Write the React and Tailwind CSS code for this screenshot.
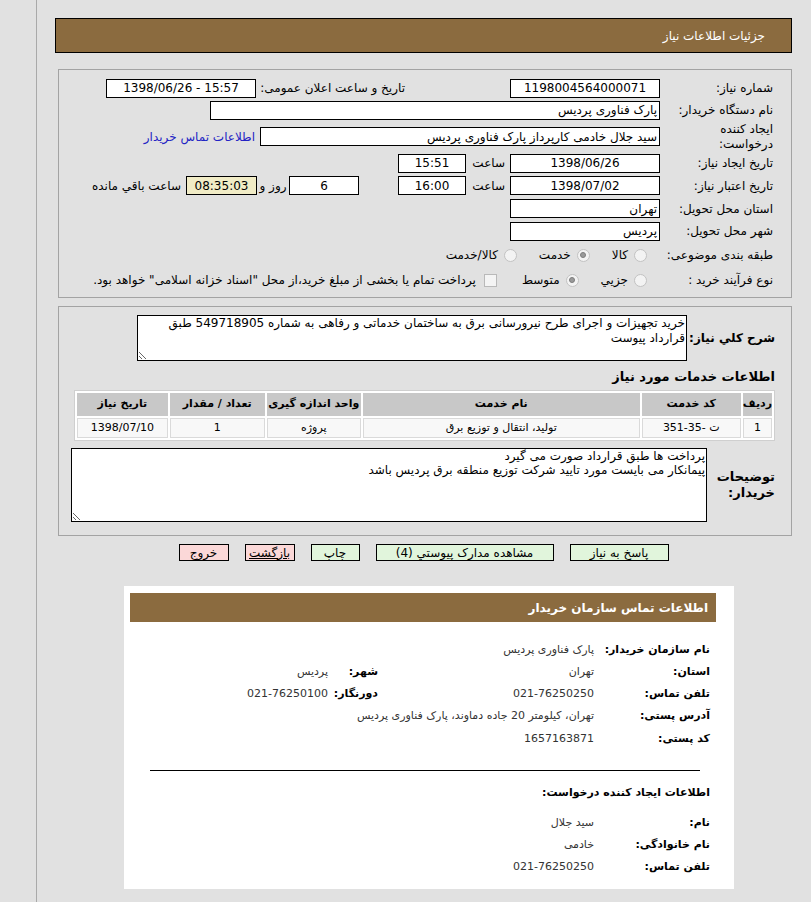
import React from 'react'

function Box({ className = '', ltr, children }) {
  return (
    <div
      dir={ltr ? 'ltr' : undefined}
      className={`flex h-[19px] shrink-0 items-center border border-black bg-white px-[2px] leading-none ${className}`}
    >
      {children}
    </div>
  )
}

function Radio({ checked }) {
  return (
    <span className="inline-flex h-[13px] w-[13px] shrink-0 items-center justify-center rounded-full border border-[#c2c2c2] bg-[#f3f3f3]">
      {checked && <span className="h-[6px] w-[6px] rounded-full border border-[#7d7d7d] bg-[#9a9a9a]" />}
    </span>
  )
}

function Choice({ checked, label, className = '' }) {
  return (
    <span className={`flex items-center gap-[6px] ${className}`}>
      <Radio checked={checked} />
      <span>{label}</span>
    </span>
  )
}

function CardRow({ label, value, label2, value2 }) {
  return (
    <div className="flex h-[22px] items-center whitespace-nowrap">
      <span className="w-[116px] shrink-0 text-[11px] font-bold">{label}</span>
      <span className="w-[216px] shrink-0 text-[11px] text-[#333]">{value}</span>
      {label2 && <span className="w-[50px] shrink-0 text-[11px] font-bold">{label2}</span>}
      {value2 && <span className="text-[11px] text-[#333]">{value2}</span>}
    </div>
  )
}

export default function App() {
  const items = [
    { row: '1', code: '351-35- ت', name: 'تولید، انتقال و توزیع برق', unit: 'پروژه', qty: '1', date: '1398/07/10' },
  ]

  return (
    <div className="flex min-h-[902px] bg-[#e1e1e1] font-['DejaVu_Sans',sans-serif] text-[12px] text-black">
      <div className="w-[37px] shrink-0 border-r border-[#a9a9a9]" />
      <div dir="rtl" className="flex-1 pl-[18px] pr-[19px] pt-[18px]">
        <div className="flex h-[35px] items-center border border-black bg-[#8b6b3f] pr-[26px] text-white">
          جزئیات اطلاعات نیاز
        </div>

        {/* need details */}
        <div className="ml-[3px] mt-[16px] border border-[#a3a3a3] pb-[5px] pr-[18px] pt-[7px]">
          <div className="flex h-[22px] items-center">
            <span className="w-[113px] shrink-0">شماره نیاز:</span>
            <Box ltr className="w-[150px] justify-center">1198004564000071</Box>
            <span className="mr-[105px] w-[149px] shrink-0">تاریخ و ساعت اعلان عمومی:</span>
            <Box ltr className="w-[150px] justify-center">1398/06/26 - 15:57</Box>
          </div>
          <div className="flex h-[22px] items-center">
            <span className="w-[113px] shrink-0">نام دستگاه خریدار:</span>
            <Box className="w-[450px]">پارک فناوری پردیس</Box>
          </div>
          <div className="flex h-[31px] items-center">
            <span className="w-[113px] shrink-0 leading-[15px]">ایجاد کننده<br />درخواست:</span>
            <Box className="w-[400px]">سید جلال خادمی کارپرداز پارک فناوری پردیس</Box>
            <a className="mr-[5px] text-[#2323c4]">اطلاعات تماس خریدار</a>
          </div>
          <div className="flex h-[22px] items-center">
            <span className="w-[113px] shrink-0">تاریخ ایجاد نیاز:</span>
            <Box ltr className="w-[150px] justify-center">1398/06/26</Box>
            <span className="w-[44px] shrink-0 pr-[5px]">ساعت</span>
            <Box ltr className="w-[68px] justify-center">15:51</Box>
          </div>
          <div className="flex h-[23px] items-center">
            <span className="w-[113px] shrink-0">تاریخ اعتبار نیاز:</span>
            <Box ltr className="w-[150px] justify-center">1398/07/02</Box>
            <span className="w-[44px] shrink-0 pr-[5px]">ساعت</span>
            <Box ltr className="w-[68px] justify-center">16:00</Box>
            <Box ltr className="mr-[39px] w-[70px] justify-center">6</Box>
            <span className="w-[32px] shrink-0 text-center">روز و</span>
            <Box ltr className="w-[71px] justify-center !bg-[#f1ecc6]">08:35:03</Box>
            <span className="mr-[5px]">ساعت باقي مانده</span>
          </div>
          <div className="flex h-[23px] items-center">
            <span className="w-[113px] shrink-0">استان محل تحویل:</span>
            <Box className="w-[150px]">تهران</Box>
          </div>
          <div className="flex h-[22px] items-center">
            <span className="w-[113px] shrink-0">شهر محل تحویل:</span>
            <Box className="w-[150px]">پردیس</Box>
          </div>
          <div className="flex h-[26px] items-center">
            <span className="w-[113px] shrink-0">طبقه بندی موضوعی:</span>
            <Choice className="mr-[13px]" label="کالا" />
            <Choice className="mr-[22px]" checked label="خدمت" />
            <Choice className="mr-[22px]" label="کالا/خدمت" />
          </div>
          <div className="flex h-[24px] items-center">
            <span className="w-[113px] shrink-0">نوع فرآیند خرید :</span>
            <Choice className="mr-[13px]" label="جزیي" />
            <Choice className="mr-[22px]" checked label="متوسط" />
            <span className="mr-[25px] flex items-center gap-[8px]">
              <span className="h-[13px] w-[13px] border border-[#b9b9b9] bg-[#f4f4f4]" />
              <span>پرداخت تمام یا بخشی از مبلغ خرید،از محل "اسناد خزانه اسلامی" خواهد بود.</span>
            </span>
          </div>
        </div>

        {/* description + items */}
        <div className="ml-[3px] mt-[8px] border border-[#a3a3a3] pb-[13px] pr-[16px] pt-[8px]">
          <div className="flex items-center">
            <span className="w-[88px] shrink-0 whitespace-nowrap text-[12px] font-bold">شرح کلي نیاز:</span>
            <textarea
              readOnly
              className="h-[46px] w-[550px] border border-black bg-white px-[1px] text-[12px] leading-[15px] outline-none"
              value={'خرید تجهیزات و اجرای طرح نیرورسانی برق به ساختمان خدماتی و رفاهی به شماره 549718905 طبق قرارداد پیوست'}
            />
          </div>
          <div className="mt-[6px] h-[18px] text-[13px] font-bold">اطلاعات خدمات مورد نیاز</div>
          <table className="mt-[5px] w-[701px] border-separate border-spacing-[2px] border border-[#cfcfcf] bg-white text-[11px]">
            <thead>
              <tr className="h-[23px] bg-[#c8c8c8] font-bold">
                <td className="w-[26px] text-center">ردیف</td>
                <td className="w-[99px] text-center">کد خدمت</td>
                <td className="w-[277px] text-center">نام خدمت</td>
                <td className="w-[94px] text-center">واحد اندازه گیری</td>
                <td className="w-[95px] text-center">تعداد / مقدار</td>
                <td className="text-center">تاریخ نیاز</td>
              </tr>
            </thead>
            <tbody>
              {items.map((it) => (
                <tr key={it.row} className="h-[20px]">
                  <td className="border border-[#dadada] bg-[#f8f8f8] text-center">{it.row}</td>
                  <td dir="ltr" className="border border-[#dadada] bg-[#f8f8f8] text-center">{it.code}</td>
                  <td className="border border-[#dadada] bg-[#f8f8f8] text-center">{it.name}</td>
                  <td className="border border-[#dadada] bg-[#f8f8f8] text-center">{it.unit}</td>
                  <td className="border border-[#dadada] bg-[#f8f8f8] text-center">{it.qty}</td>
                  <td className="border border-[#dadada] bg-[#f8f8f8] text-center">{it.date}</td>
                </tr>
              ))}
            </tbody>
          </table>
          <div className="mt-[7px] flex items-center">
            <span className="w-[68px] shrink-0 text-[13px] font-bold leading-[16px]">توضیحات<br />خریدار:</span>
            <textarea
              readOnly
              className="h-[74px] w-[636px] border border-black bg-white px-[1px] text-[12px] leading-[14px] outline-none"
              value={'پرداخت ها طبق قرارداد صورت می گیرد\nپیمانکار می بایست مورد تایید شرکت توزیع منطقه برق پردیس باشد'}
            />
          </div>
        </div>

        {/* actions */}
        <div className="mt-[8px] flex justify-center gap-[16px] text-[12px]">
          <button className="h-[17px] w-[99px] border border-black bg-[#e1f5dc] leading-none">پاسخ به نیاز</button>
          <button className="h-[17px] w-[178px] border border-black bg-[#e1f5dc] leading-none">مشاهده مدارک پیوستي (4)</button>
          <button className="h-[17px] w-[49px] border border-black bg-[#e1f5dc] leading-none">چاپ</button>
          <button className="h-[17px] w-[50px] border border-black bg-[#fbd8d8] leading-none underline">بازگشت</button>
          <button className="h-[17px] w-[50px] border border-black bg-[#fbd8d8] leading-none">خروج</button>
        </div>

        {/* buyer contact card */}
        <div className="mr-[58px] mt-[25px] w-[610px] bg-white pb-[11px] pl-[6px] pr-[18px] pt-[7px]">
          <div className="flex h-[29px] items-center bg-[#8b6b3f] pr-[8px] text-[12px] font-bold text-white">
            اطلاعات تماس سازمان خریدار
          </div>
          <div className="mt-[17px] pr-[6px]">
            <CardRow label="نام سازمان خریدار:" value="پارک فناوری پردیس" />
            <CardRow label="استان:" value="تهران" label2="شهر:" value2="پردیس" />
            <CardRow label="تلفن تماس:" value="021-76250250" label2="دورنگار:" value2="021-76250100" />
            <CardRow label="آدرس پستی:" value="تهران، کیلومتر 20 جاده دماوند، پارک فناوری پردیس" />
            <div className="h-[1px]" />
            <CardRow label="کد پستی:" value="1657163871" />
            <div className="mr-[10px] mt-[20px] w-[550px] border-t border-black" />
            <div className="mt-[13px] flex h-[18px] items-center text-[11px] font-bold">اطلاعات ایجاد کننده درخواست:</div>
            <div className="mt-[10px]">
              <CardRow label="نام:" value="سید جلال" />
              <CardRow label="نام خانوادگی:" value="خادمی" />
              <CardRow label="تلفن تماس:" value="021-76250250" />
            </div>
          </div>
        </div>
      </div>
    </div>
  )
}
